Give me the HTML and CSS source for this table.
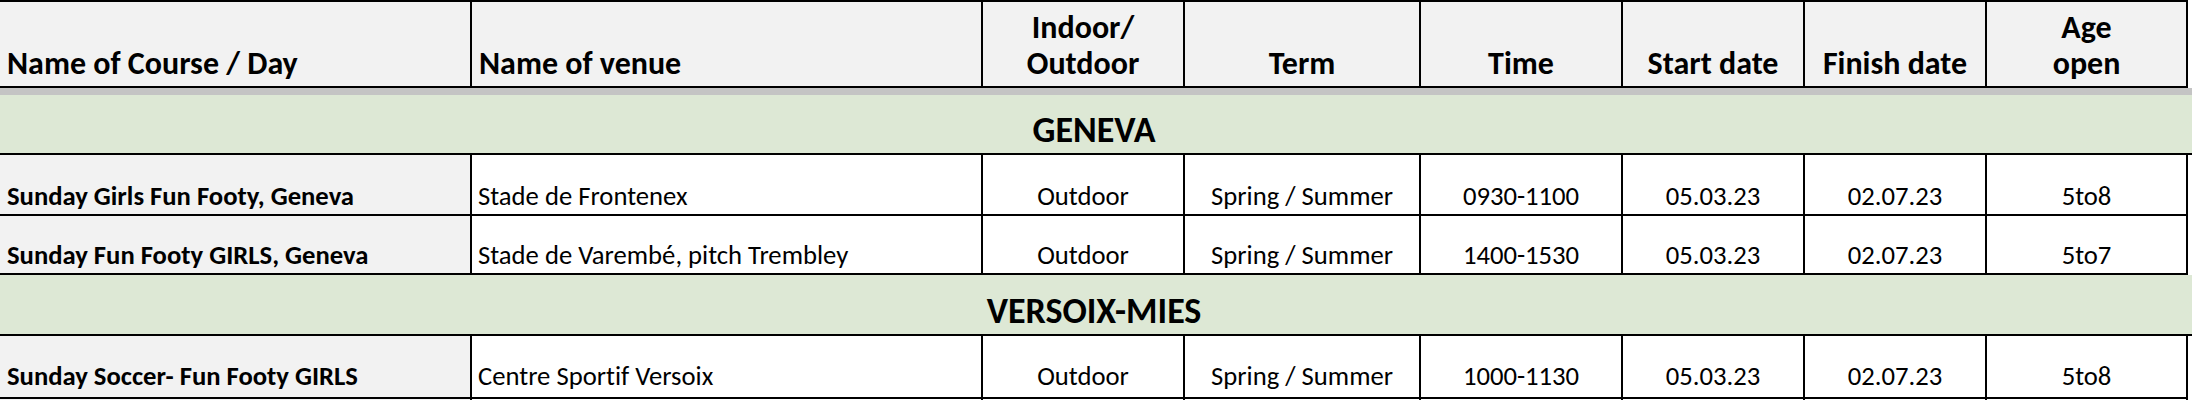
FILE: index.html
```html
<!DOCTYPE html>
<html lang="en">
<head>
<meta charset="utf-8">
<title>Courses</title>
<link rel="stylesheet" href="styles.css">
</head>
<body>
<div class="sheet">
  <div class="row head">
    <div class="cell left">Name of Course / Day</div>
    <div class="cell left">Name of venue</div>
    <div class="cell">Indoor/<br>Outdoor</div>
    <div class="cell">Term</div>
    <div class="cell">Time</div>
    <div class="cell">Start date</div>
    <div class="cell">Finish date</div>
    <div class="cell">Age<br>open</div>
  </div>
  <div class="band"></div>
  <div class="section s1">GENEVA</div>
  <div class="row data r1">
    <div class="cell left name">Sunday Girls Fun Footy, Geneva</div>
    <div class="cell left">Stade de Frontenex</div>
    <div class="cell">Outdoor</div>
    <div class="cell">Spring / Summer</div>
    <div class="cell">0930-1100</div>
    <div class="cell">05.03.23</div>
    <div class="cell">02.07.23</div>
    <div class="cell">5to8</div>
  </div>
  <div class="row data r2">
    <div class="cell left name">Sunday Fun Footy GIRLS, Geneva</div>
    <div class="cell left">Stade de Varembé, pitch Trembley</div>
    <div class="cell">Outdoor</div>
    <div class="cell">Spring / Summer</div>
    <div class="cell">1400-1530</div>
    <div class="cell">05.03.23</div>
    <div class="cell">02.07.23</div>
    <div class="cell">5to7</div>
  </div>
  <div class="section s2">VERSOIX-MIES</div>
  <div class="row data r3">
    <div class="cell left name">Sunday Soccer- Fun Footy GIRLS</div>
    <div class="cell left">Centre Sportif Versoix</div>
    <div class="cell">Outdoor</div>
    <div class="cell">Spring / Summer</div>
    <div class="cell">1000-1130</div>
    <div class="cell">05.03.23</div>
    <div class="cell">02.07.23</div>
    <div class="cell">5to8</div>
  </div>
  <div class="row data r4">
    <div class="cell left name"></div>
    <div class="cell left"></div>
    <div class="cell"></div>
    <div class="cell"></div>
    <div class="cell"></div>
    <div class="cell"></div>
    <div class="cell"></div>
    <div class="cell"></div>
  </div>
</div>
</body>
</html>
```

FILE: styles.css
```css
* { box-sizing: border-box; }
html, body {
  margin: 0;
  padding: 0;
  background: #ffffff;
}
body {
  font-family: "Carlito", "Lato", "Liberation Sans", sans-serif;
  font-variant-ligatures: none;
  color: #000;
  width: 2192px;
  height: 400px;
  overflow: hidden;
}
.sheet {
  display: flex;
  flex-direction: column;
  height: 400px;
  overflow: hidden;
}
.row {
  display: grid;
  grid-template-columns: 472px 511px 202px 236px 202px 182px 182px 201px;
  width: 2188px;
  border-bottom: 2px solid #000;
  flex: none;
}
.cell {
  border-right: 2px solid #000;
  display: flex;
  flex-direction: column;
  justify-content: flex-end;
  align-items: center;
  text-align: center;
  white-space: nowrap;
}
.cell.left {
  align-items: flex-start;
  text-align: left;
  padding-left: 6px;
}
.head {
  border-top: 2px solid #000;
  height: 88px;
  background: #f2f2f2;
  font-weight: bold;
  font-size: 32px;
  line-height: 36px;
}
.head .cell {
  padding-bottom: 4px;
}
.head .cell.left {
  padding-left: 7px;
}
.band {
  flex: none;
  height: 7px;
  background: #c4c4c4;
}
.section {
  flex: none;
  width: 2192px;
  background: #dde8d5;
  border-bottom: 2px solid #000;
  font-weight: bold;
  font-size: 36px;
  line-height: 40px;
  text-align: center;
  display: flex;
  align-items: flex-end;
  justify-content: center;
  padding-right: 4px;
  padding-bottom: 3px;
}
.s1 { height: 60px; }
.s2 { height: 61px; }
.data {
  font-size: 26.67px;
  line-height: 30px;
}
.data .cell {
  padding-bottom: 3px;
}
.data .cell.name {
  background: #f2f2f2;
  font-weight: bold;
  padding-left: 7px;
}
.r1 { height: 61px; }
.r2 { height: 59px; }
.r3 { height: 63px; }
.r3 .cell { padding-bottom: 6px; }
.r4 {
  height: 1px;
  border-bottom: 0;
}
```
